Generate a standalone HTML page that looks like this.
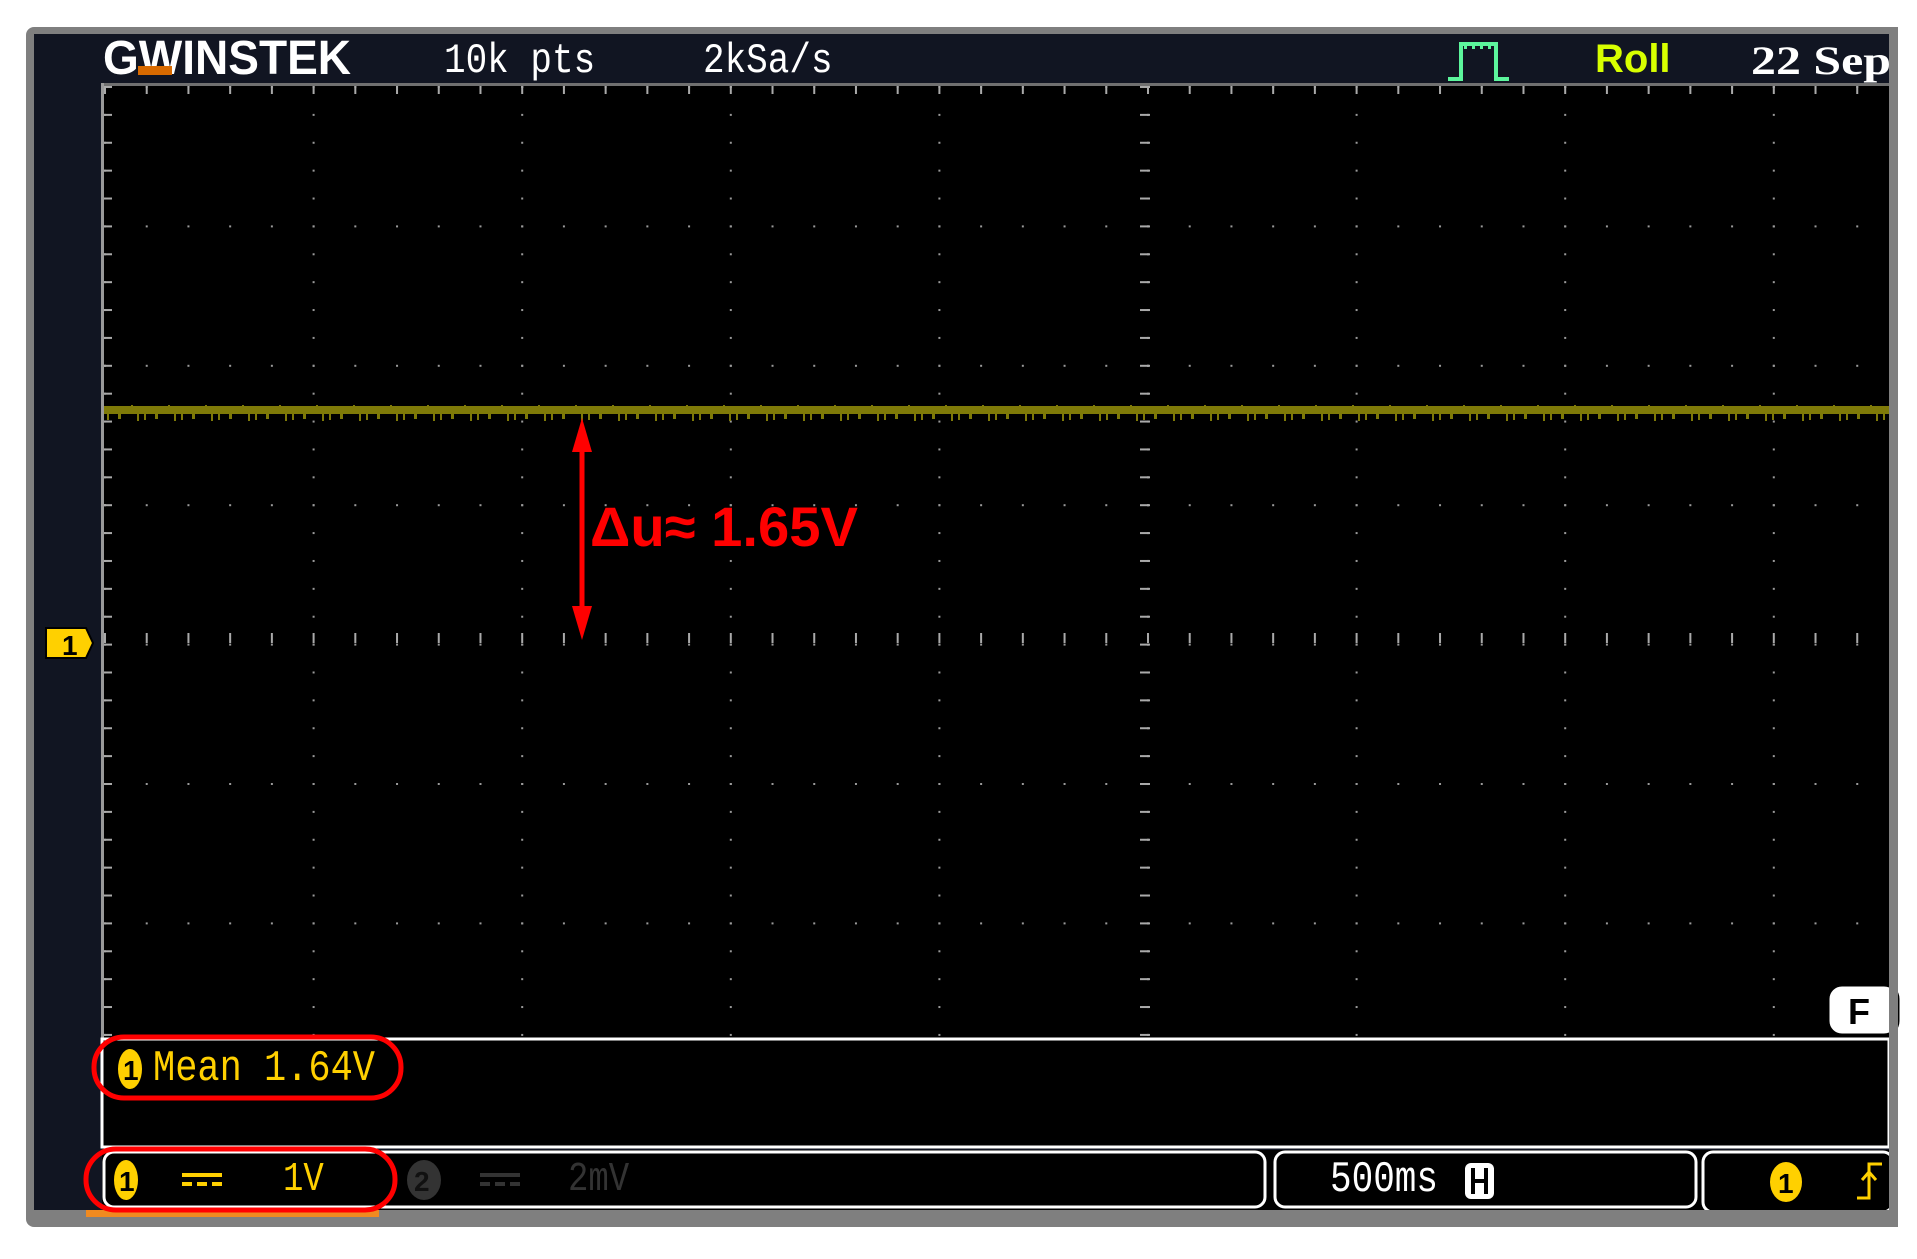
<!DOCTYPE html>
<html><head><meta charset="utf-8"><style>
html,body{margin:0;padding:0;background:#fff;width:1917px;height:1259px;overflow:hidden}
svg{display:block}
.m{font-family:"Liberation Mono",monospace}
</style></head><body>
<svg width="1917" height="1259" viewBox="0 0 1917 1259" xmlns="http://www.w3.org/2000/svg">
<defs>
<pattern id="pv" x="104" y="86" width="208.6" height="27.88" patternUnits="userSpaceOnUse"><rect x="0" y="0" width="2" height="2" fill="#9a9a9a"/></pattern>
<pattern id="ph" x="104" y="86" width="41.72" height="139.4" patternUnits="userSpaceOnUse"><rect x="0" y="0" width="2" height="2" fill="#9a9a9a"/></pattern>
<pattern id="tt" x="104" y="86" width="41.72" height="20" patternUnits="userSpaceOnUse"><rect x="0" y="0" width="2" height="8" fill="#aaa"/></pattern>
<pattern id="tl" x="104" y="86" width="20" height="27.88" patternUnits="userSpaceOnUse"><rect x="0" y="0" width="8" height="2" fill="#aaa"/></pattern>
<pattern id="ct" x="104" y="633" width="41.72" height="20" patternUnits="userSpaceOnUse"><rect x="0" y="0" width="2" height="10" fill="#aaa"/></pattern>
<pattern id="cv" x="1140" y="86" width="20" height="27.88" patternUnits="userSpaceOnUse"><rect x="0" y="0" width="10" height="2" fill="#aaa"/></pattern>
<pattern id="nz" x="104" y="405" width="37" height="16" patternUnits="userSpaceOnUse">
<rect x="3" y="9" width="2" height="6" fill="#7f7a08"/><rect x="14" y="9" width="3" height="5" fill="#7f7a08"/><rect x="27" y="0" width="2" height="6" fill="#7f7a08"/><rect x="33" y="9" width="2" height="7" fill="#7f7a08"/></pattern>
</defs>
<!-- frame -->
<rect x="26" y="27" width="1872" height="1200" rx="8" fill="#7f7f7f"/>
<rect x="34" y="34" width="1855" height="1183" fill="#111522"/>
<!-- header -->
<text x="103" y="74" font-family="Liberation Sans,sans-serif" font-weight="bold" font-size="48" fill="#fff" textLength="248" lengthAdjust="spacingAndGlyphs">GWINSTEK</text>
<rect x="138" y="66" width="34" height="9" fill="#d86a00"/>
<text x="444" y="72" class="m" font-size="36" fill="#fff" transform="translate(444 72) scale(1 1.15) translate(-444 -72)">10k pts</text>
<text x="703" y="72" class="m" font-size="36" fill="#fff" transform="translate(703 72) scale(1 1.15) translate(-703 -72)">2kSa/s</text>
<path d="M1448 79 H1461 V44 H1496 V79 H1509" stroke="#5cf59c" stroke-width="4" fill="none"/>
<path d="M1464 47 h3 M1472 47 h3 M1480 47 h3 M1488 47 h3" stroke="#5cf59c" stroke-width="4"/>
<text x="1595" y="72" font-family="Liberation Sans,sans-serif" font-weight="bold" font-size="40" fill="#d8ff00">Roll</text>
<text x="1751" y="74" font-family="Liberation Serif,serif" font-weight="bold" font-size="40" fill="#fff" textLength="140" lengthAdjust="spacingAndGlyphs">22 Sep</text>
<!-- grid -->
<rect x="101" y="83" width="1788" height="3" fill="#707070"/>
<rect x="101" y="83" width="3" height="1064" fill="#9a9a9a"/>
<rect x="104" y="86" width="1785" height="953" fill="#000"/>
<rect x="104" y="86" width="1785" height="953" fill="url(#pv)"/>
<rect x="104" y="86" width="1785" height="953" fill="url(#ph)"/>
<rect x="104" y="86" width="1785" height="10" fill="url(#tt)"/>
<rect x="104" y="86" width="10" height="953" fill="url(#tl)"/>
<rect x="104" y="633" width="1785" height="20" fill="url(#ct)"/>
<rect x="1140" y="86" width="10" height="953" fill="url(#cv)"/>
<!-- trace -->
<rect x="104" y="406" width="1785" height="8" fill="#7f7a08"/>
<rect x="104" y="405" width="1785" height="16" fill="url(#nz)"/>
<!-- marker 1 -->
<path d="M46 628 H86 L93 643 L86 658 H46 Z" fill="#ffd000" stroke="#000" stroke-width="2"/>
<text x="62" y="655" font-family="Liberation Sans,sans-serif" font-weight="bold" font-size="28" fill="#000">1</text>
<!-- annotation -->
<line x1="582" y1="440" x2="582" y2="615" stroke="#ff0000" stroke-width="5"/>
<path d="M582 418 L572 452 H592 Z" fill="#ff0000"/>
<path d="M582 640 L572 606 H592 Z" fill="#ff0000"/>
<text x="590" y="546" font-family="Liberation Sans,sans-serif" font-weight="bold" font-size="56" fill="#ff0000" textLength="268" lengthAdjust="spacingAndGlyphs">Δu≈ 1.65V</text>
<!-- measure panel -->
<rect x="102" y="1039" width="1787" height="108" fill="#000" stroke="#fff" stroke-width="3"/>
<ellipse cx="130" cy="1069" rx="12" ry="20" fill="#ffd000"/>
<text x="123" y="1080" font-family="Liberation Sans,sans-serif" font-weight="bold" font-size="28" fill="#000">1</text>
<text x="153" y="1080" class="m" font-size="36" fill="#ffd000" textLength="222" lengthAdjust="spacingAndGlyphs" transform="translate(153 1080) scale(1 1.2) translate(-153 -1080)">Mean 1.64V</text>
<rect x="94" y="1037" width="307" height="61" rx="30" fill="none" stroke="#ff0000" stroke-width="5"/>
<!-- bottom bar -->
<rect x="102" y="1150" width="1787" height="60" fill="#000"/>
<rect x="104" y="1152" width="1161" height="55" rx="10" fill="#000" stroke="#fff" stroke-width="3"/>
<rect x="1275" y="1152" width="421" height="55" rx="10" fill="#000" stroke="#fff" stroke-width="3"/>
<rect x="1703" y="1152" width="190" height="60" rx="10" fill="#000" stroke="#fff" stroke-width="3"/>
<rect x="34" y="1210" width="1855" height="17" fill="#7f7f7f"/>
<rect x="86" y="1210" width="293" height="7" fill="#f08a20"/>
<ellipse cx="126" cy="1180" rx="12" ry="20" fill="#ffd000"/>
<text x="119" y="1191" font-family="Liberation Sans,sans-serif" font-weight="bold" font-size="28" fill="#000">1</text>
<path d="M182 1175 h40 M182 1184 h10 M197 1184 h10 M212 1184 h10" stroke="#ffd000" stroke-width="4"/>
<text x="283" y="1190" class="m" font-size="34" fill="#ffd000" transform="translate(283 1190) scale(1 1.2) translate(-283 -1190)">1V</text>
<ellipse cx="424" cy="1180" rx="17" ry="20" fill="#333"/>
<text x="414" y="1191" font-family="Liberation Sans,sans-serif" font-weight="bold" font-size="28" fill="#111">2</text>
<path d="M480 1175 h40 M480 1184 h10 M495 1184 h10 M510 1184 h10" stroke="#333" stroke-width="4"/>
<text x="568" y="1190" class="m" font-size="34" fill="#333" transform="translate(568 1190) scale(1 1.2) translate(-568 -1190)">2mV</text>
<rect x="86" y="1149" width="309" height="61" rx="30" fill="none" stroke="#ff0000" stroke-width="5"/>
<text x="1330" y="1191" class="m" font-size="36" fill="#fff" transform="translate(1330 1191) scale(1 1.2) translate(-1330 -1191)">500ms</text>
<rect x="1465" y="1163" width="29" height="36" rx="6" fill="#fff"/>
<path d="M1473 1168 V1194 M1486 1168 V1194 M1473 1181 H1486" stroke="#000" stroke-width="4"/>
<ellipse cx="1786" cy="1182" rx="16" ry="20" fill="#ffd000"/>
<text x="1778" y="1193" font-family="Liberation Sans,sans-serif" font-weight="bold" font-size="28" fill="#000">1</text>
<path d="M1857 1198 H1869 V1164 H1882 M1862 1180 L1869 1172 L1876 1180" stroke="#ffd000" stroke-width="3" fill="none"/>
<!-- F badge -->
<rect x="1828" y="985" width="70" height="50" rx="14" fill="#fff" stroke="#000" stroke-width="3"/>
<text x="1848" y="1024" font-family="Liberation Sans,sans-serif" font-weight="bold" font-size="36" fill="#000">F</text>
<rect x="1889" y="980" width="9" height="60" fill="#7f7f7f"/>
<rect x="1889" y="27" width="9" height="1200" fill="#7f7f7f"/>
</svg>
</body></html>
